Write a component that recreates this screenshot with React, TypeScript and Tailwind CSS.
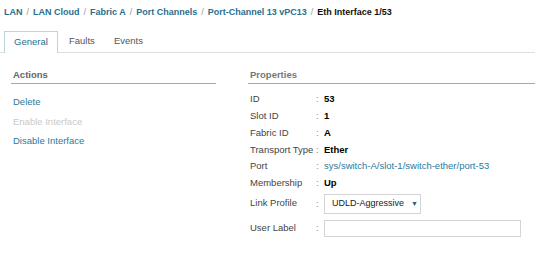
import React from 'react';

const crumbs = ['LAN', 'LAN Cloud', 'Fabric A', 'Port Channels', 'Port-Channel 13 vPC13'];

const props: { label: string; value: string }[] = [
  { label: 'ID', value: '53' },
  { label: 'Slot ID', value: '1' },
  { label: 'Fabric ID', value: 'A' },
  { label: 'Transport Type', value: 'Ether' },
];

const App: React.FC = () => {
  return (
    <div className="w-[535px] h-[257px] bg-white overflow-hidden font-['Liberation_Sans',Arial,sans-serif] text-[#333]">
      {/* Breadcrumb */}
      <div className="flex items-center pl-[4px] pt-[7px] h-[19px] text-[9px] font-bold whitespace-nowrap">
        {crumbs.map((c) => (
          <React.Fragment key={c}>
            <span className="text-[#2a6f8f]">{c}</span>
            <span className="text-[#999] font-normal mx-[4px]">/</span>
          </React.Fragment>
        ))}
        <span className="text-[#111]">Eth Interface 1/53</span>
      </div>

      {/* Tabs */}
      <div className="mt-[13px] flex items-end border-b border-[#dedede] h-[21px] pl-[4px] text-[9.5px]">
        <div className="h-[22px] w-[54px] -mb-px border border-b-0 border-[#bcd3e0] bg-white flex items-center justify-center text-[#2a6f8f]">
          General
        </div>
        <div className="h-[21px] flex items-center pl-[11px] text-[#555]">Faults</div>
        <div className="h-[21px] flex items-center pl-[19px] text-[#555]">Events</div>
      </div>

      {/* Body */}
      <div className="flex pt-[16px] text-[9.5px]">
        {/* Actions */}
        <div className="ml-[11px] w-[205px]">
          <div className="pl-[2px] pb-[4px] border-b border-[#a8a8a8] font-bold text-[#666] h-[15px] leading-[11px]">
            Actions
          </div>
          <div className="pl-[2px] pt-[12px] flex flex-col gap-[8px] leading-[11.5px]">
            <span className="text-[#2a7a9c]">Delete</span>
            <span className="text-[#c9c9c9]">Enable Interface</span>
            <span className="text-[#2a7a9c]">Disable Interface</span>
          </div>
        </div>

        {/* Properties */}
        <div className="ml-[32px] flex-1">
          <div className="pl-[2px] pb-[4px] border-b border-[#a8a8a8] font-bold text-[#777] h-[15px] leading-[11px]">
            Properties
          </div>
          <div className="pl-[2px] pt-[7px] flex flex-col">
            {props.map((p) => (
              <div key={p.label} className="flex items-center h-[16.8px]">
                <span className="w-[66px] text-[#444]">{p.label}</span>
                <span className="w-[8px] text-[#888]">:</span>
                <span className="font-bold text-black">{p.value}</span>
              </div>
            ))}
            <div className="flex items-center h-[16.8px]">
              <span className="w-[66px] text-[#444]">Port</span>
              <span className="w-[8px] text-[#888]">:</span>
              <span className="text-[#2a7a9c]">sys/switch-A/slot-1/switch-ether/port-53</span>
            </div>
            <div className="flex items-center h-[16.8px]">
              <span className="w-[66px] text-[#444]">Membership</span>
              <span className="w-[8px] text-[#888]">:</span>
              <span className="font-bold text-black">Up</span>
            </div>
            <div className="flex items-center h-[20px] mt-[2px]">
              <span className="w-[66px] text-[#444] -mt-[2px]">Link Profile</span>
              <span className="w-[8px] text-[#888]">:</span>
              <div className="h-[20px] w-[97px] border border-[#d4d4d4] flex items-center pl-[7px] text-[9px] text-[#222] whitespace-nowrap">
                UDLD-Aggressive
                <span className="ml-[7px] text-[7px] text-[#1f5f85]">▼</span>
              </div>
            </div>
            <div className="flex items-center h-[17px] mt-[6px]">
              <span className="w-[66px] text-[#444]">User Label</span>
              <span className="w-[8px] text-[#888]">:</span>
              <div className="h-[17px] w-[197px] border border-[#d4d4d4]" />
            </div>
          </div>
        </div>
      </div>
    </div>
  );
};

export default App;
